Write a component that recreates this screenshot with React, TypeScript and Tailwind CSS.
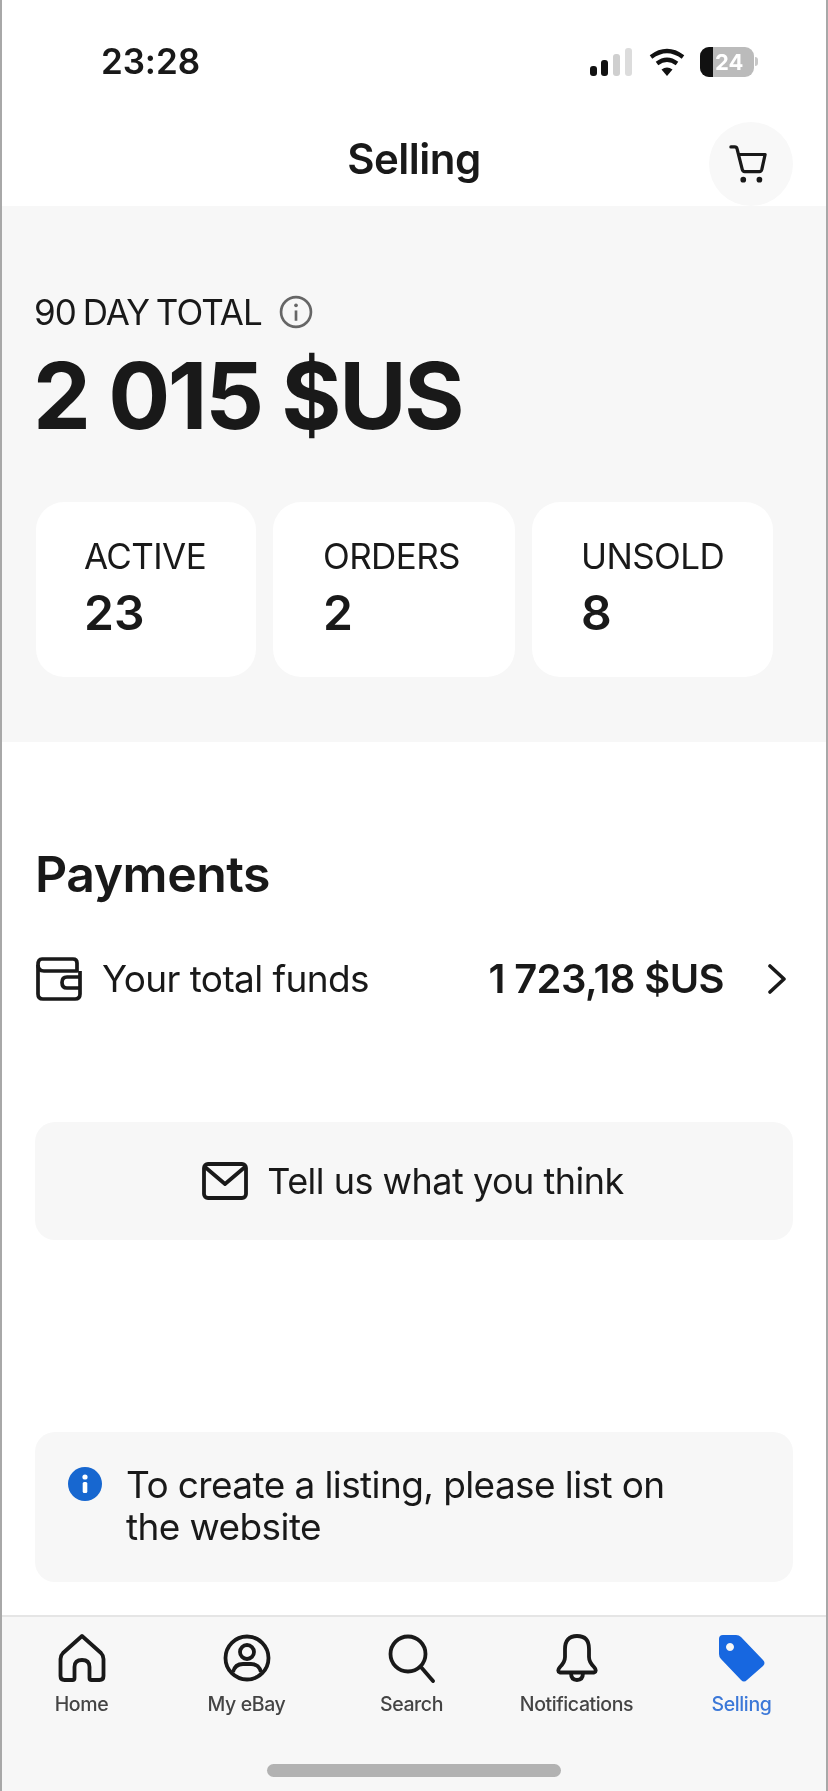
const NAV = [
  { label: 'Home', icon: <HomeIcon /> },
  { label: 'My eBay', icon: <UserIcon /> },
  { label: 'Search', icon: <SearchIcon /> },
  { label: 'Notifications', icon: <BellIcon /> },
  { label: 'Selling', icon: <TagIcon />, active: true },
]

const STATS = [
  { label: 'ACTIVE', value: '23', w: 'w-[220px]', pl: 'pl-[48px]' },
  { label: 'ORDERS', value: '2', w: 'w-[242px]', pl: 'pl-[50px]' },
  { label: 'UNSOLD', value: '8', w: 'w-[241px]', pl: 'pl-[49px]' },
]

function HomeIcon() {
  return (
    <svg width="50" height="50" viewBox="0 0 50 50" fill="none" stroke="#191919" strokeWidth="3.8" strokeLinejoin="round" strokeLinecap="round">
      <path d="M25 3 L6 20 Q3.5 22.5 3.5 26 V43 Q3.5 47 7.5 47 H15.5 Q17.5 47 17.5 45 V34 Q17.5 27 25 27 Q32.5 27 32.5 34 V45 Q32.5 47 34.5 47 H42.5 Q46.5 47 46.5 43 V26 Q46.5 22.5 44 20 Z" />
    </svg>
  )
}

function UserIcon() {
  return (
    <svg width="50" height="50" viewBox="0 0 50 50" fill="none" stroke="#191919" strokeWidth="3.8">
      <circle cx="25" cy="25" r="21.5" />
      <circle cx="25" cy="19" r="7" />
      <path d="M11 39 Q13 31 21 31 H29 Q37 31 39 39" />
    </svg>
  )
}

function SearchIcon() {
  return (
    <svg width="50" height="50" viewBox="0 0 50 50" fill="none" stroke="#191919" strokeWidth="3.8" strokeLinecap="round">
      <circle cx="21" cy="21" r="17.5" />
      <path d="M33.5 33.5 L46 48" />
    </svg>
  )
}

function BellIcon() {
  return (
    <svg width="50" height="50" viewBox="0 0 50 50" fill="none" stroke="#191919" strokeWidth="3.8" strokeLinejoin="round" strokeLinecap="round">
      <path d="M25 3 Q13 3 13 16 V24 Q13 29 8 34 Q4.5 38 8 39.5 H42 Q45.5 38 42 34 Q37 29 37 24 V16 Q37 3 25 3 Z" />
      <path d="M19 40 Q19 47 25 47 Q31 47 31 40" />
    </svg>
  )
}

function TagIcon() {
  return (
    <svg width="50" height="50" viewBox="0 0 50 50">
      <path fillRule="evenodd" fill="#1767e0" d="M6 2 H19 Q22 2 24 4 L46 27 Q49 30 46 33 L30 47 Q27 50 24 47 L4 26 Q2 24 2 21 V6 Q2 2 6 2 Z M13 10 a4 4 0 1 0 0.01 0 Z" />
    </svg>
  )
}

function CartIcon() {
  return (
    <svg width="38" height="40" viewBox="0 0 40 40" fill="none" stroke="#191919" strokeWidth="3.4" strokeLinecap="round" strokeLinejoin="round">
      <path d="M2 2 H6 Q8 2 8.5 4 L14 26 Q14.5 28 16.5 28 H32 Q34 28 34.5 26 L38 10 H10" />
      <circle cx="15" cy="36.5" r="3" fill="#191919" stroke="none" />
      <circle cx="32" cy="36.5" r="3" fill="#191919" stroke="none" />
    </svg>
  )
}

function WalletIcon() {
  return (
    <svg width="47" height="44" viewBox="0 0 47 44" fill="none" stroke="#191919" strokeWidth="3.7" strokeLinejoin="round">
      <path d="M6 2 H37 Q41 2 41 6 V14 H8 Q2 14 2 8 Q2 2 6 2 Z" />
      <path d="M2 8 V37 Q2 42 7 42 H39 Q44 42 44 37 V14" />
      <path d="M44 20 H31 Q26 20 26 25.5 Q26 31 31 31 H44" />
    </svg>
  )
}

function MailIcon() {
  return (
    <svg width="46" height="38" viewBox="0 0 46 38" fill="none" stroke="#191919" strokeWidth="3.8" strokeLinejoin="round" strokeLinecap="round">
      <rect x="2" y="2" width="42" height="34" rx="4" />
      <path d="M3 5 L23 22 L43 5" />
    </svg>
  )
}

function StatusIcons() {
  return (
    <div className="flex items-center">
      <svg width="42" height="28" viewBox="0 0 42 28">
        <rect x="0" y="18" width="7" height="10" rx="3" fill="#111" />
        <rect x="11" y="12" width="7" height="16" rx="3" fill="#111" />
        <rect x="23" y="6" width="7" height="22" rx="3" fill="#cfcfcf" />
        <rect x="35" y="0" width="7" height="28" rx="3" fill="#dcdcdc" />
      </svg>
      <svg className="ml-[17px]" width="36" height="28" viewBox="0 0 36 28" fill="none" stroke="#111" strokeWidth="4.2">
        <path d="M2 9 Q18 -3 34 9" />
        <path d="M8 15.5 Q18 8 28 15.5" />
        <path d="M18 28 L12.5 21.5 Q18 17.5 23.5 21.5 Z" fill="#111" stroke="none" />
      </svg>
      <div className="ml-[15px] flex items-center">
        <div className="flex h-[30px] w-[54px] overflow-hidden rounded-[9px] bg-[#bbbbbb]">
          <div className="h-full w-[13px] bg-[#111111]" />
          <span className="pl-[2px] text-[22px] leading-[30px] font-bold text-white">24</span>
        </div>
        <div className="ml-[1px] h-[9px] w-[3px] rounded-r-full bg-[#c8c8c8]" />
      </div>
    </div>
  )
}

export default function App() {
  return (
    <div className="flex h-[1791px] w-[828px] flex-col overflow-hidden border-x-2 border-[#a8a8a8] bg-white font-['Inter',sans-serif] text-[#191919] blur-[0.6px]">
      <div className="flex h-[122px] items-center justify-between pr-[68px] pl-[99px] pt-[1px]">
        <span className="text-[35px] font-semibold tracking-[-0.1px]">23:28</span>
        <StatusIcons />
      </div>

      <div className="relative flex h-[84px] justify-center pt-[14px]">
        <h1 className="text-[42px] leading-[46px] font-semibold tracking-[-0.5px]">Selling</h1>
        <div className="absolute top-[0px] right-[33px] z-10 flex h-[84px] w-[84px] items-center justify-center rounded-full bg-[#f8f8f8] pr-[6px]">
          <CartIcon />
        </div>
      </div>

      <section className="h-[536px] bg-[#f7f7f7] pr-[34px] pl-[32px] pt-[86px]">
        <div className="flex items-center">
          <span className="text-[35px] leading-[40px] tracking-[-1px] [word-spacing:-2px]">90 DAY TOTAL</span>
          <svg className="ml-[17px]" width="34" height="34" viewBox="0 0 33 33" fill="none" stroke="#666" strokeWidth="2.6">
            <circle cx="16.5" cy="16.5" r="14.5" />
            <path d="M16.5 15 V25" />
            <circle cx="16.5" cy="10" r="1.8" fill="#666" stroke="none" />
          </svg>
        </div>
        <div className="mt-[14px] -ml-[1px] text-[92px] leading-[100px] font-bold tracking-[-2.3px]">2 015 $US</div>
        <div className="mt-[56px] ml-[2px] flex justify-between pr-[19px]">
          {STATS.map((s) => (
            <div key={s.label} className={`h-[175px] rounded-[28px] bg-white pt-[34px] ${s.w} ${s.pl}`}>
              <div className="text-[35px] leading-[40px] tracking-[-0.6px]">{s.label}</div>
              <div className="mt-[10px] text-[48px] leading-[54px] font-semibold">{s.value}</div>
            </div>
          ))}
        </div>
      </section>

      <main className="px-[33px]">
        <h2 className="mt-[104px] text-[50px] leading-[56px] font-semibold tracking-[-0.5px]">Payments</h2>
        <div className="mt-[53px] flex h-[48px] items-center pr-[6px] pl-[1px]">
          <WalletIcon />
          <span className="ml-[19px] text-[37px] tracking-[-0.6px]">Your total funds</span>
          <span className="ml-auto text-[40px] font-semibold tracking-[-0.6px]">1 723,18 $US</span>
          <svg className="ml-[43px]" width="20" height="30" viewBox="0 0 20 30" fill="none" stroke="#191919" strokeWidth="3.6" strokeLinecap="round" strokeLinejoin="round">
            <path d="M3 2 L17 15 L3 28" />
          </svg>
        </div>
        <button className="mt-[119px] flex h-[118px] w-full items-center justify-center rounded-[20px] bg-[#f7f7f7] pr-[2px]">
          <MailIcon />
          <span className="ml-[19px] text-[36px] tracking-[-0.5px]">Tell us what you think</span>
        </button>
        <div className="mt-[192px] flex h-[150px] rounded-[20px] bg-[#f7f7f7] pt-[32px] pl-[33px]">
          <svg className="mt-[3px] shrink-0" width="34" height="34" viewBox="0 0 34 34">
            <circle cx="17" cy="17" r="17" fill="#1767d0" />
            <circle cx="17" cy="10" r="2.6" fill="#fff" />
            <rect x="14.7" y="15" width="4.6" height="11" rx="1.5" fill="#fff" />
          </svg>
          <p className="ml-[24px] w-[560px] text-[37px] leading-[42px] tracking-[-0.6px]">To create a listing, please list on the website</p>
        </div>
      </main>

      <nav className="mt-[33px] flex flex-1 flex-col items-center border-t-2 border-[#e5e5e5] bg-[#f7f7f7]">
        <div className="-ml-[5px] grid w-[825px] grid-cols-5 pt-[16px]">
          {NAV.map((n) => (
            <div key={n.label} className="flex flex-col items-center">
              {n.icon}
              <span className={`mt-[9px] text-[19.5px] leading-[24px] font-medium tracking-[-0.4px] ${n.active ? 'text-[#3b78d8]' : 'text-[#444444]'}`}>{n.label}</span>
            </div>
          ))}
        </div>
        <div className="mt-[48px] h-[13px] w-[294px] rounded-full bg-[#b2b2b2]" />
      </nav>
    </div>
  )
}
